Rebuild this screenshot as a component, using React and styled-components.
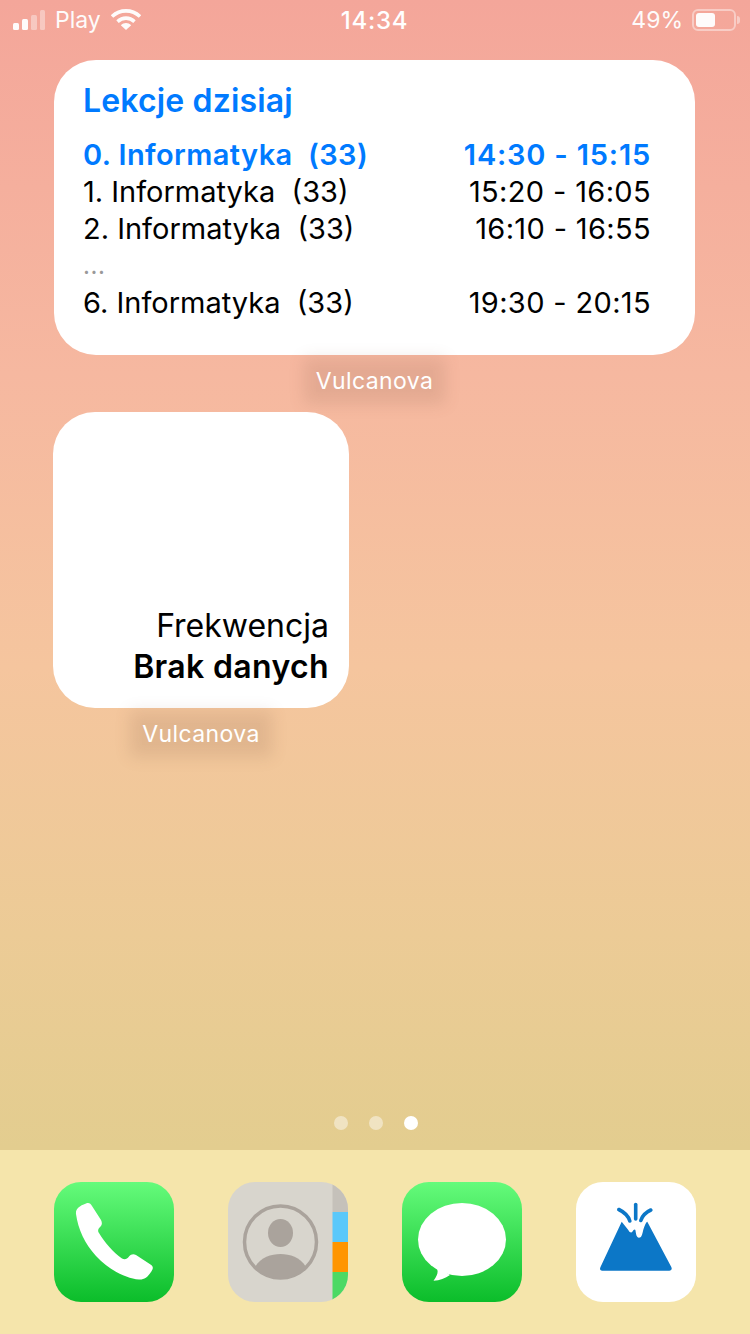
import React from 'react'
import styled, { createGlobalStyle } from 'styled-components'

const Global = createGlobalStyle`
  html, body { margin: 0; padding: 0; }
  body { font-family: Inter, "Liberation Sans", sans-serif; }
`

const lessons = [
  { name: '0. Informatyka', room: '(33)', time: '14:30 - 15:15', active: true },
  { name: '1. Informatyka', room: '(33)', time: '15:20 - 16:05' },
  { name: '2. Informatyka', room: '(33)', time: '16:10 - 16:55' },
  { dots: true },
  { name: '6. Informatyka', room: '(33)', time: '19:30 - 20:15' },
]

const Screen = styled.div`
  width: 750px;
  height: 1334px;
  overflow: hidden;
  display: flex;
  flex-direction: column;
  background: linear-gradient(180deg, #f4a69a 0%, #f6b8a0 28%, #f5c59e 50%, #eccb96 70%, #e3cd8f 86%, #e3cd8f 100%);
`

const StatusBar = styled.div`
  height: 40px;
  flex: none;
  display: grid;
  grid-template-columns: 1fr auto 1fr;
  align-items: center;
  padding: 0 14px 0 13px;
  color: #fff;
  font-size: 23px;
`

const StatusSide = styled.div`
  display: flex;
  align-items: center;
  gap: ${p => p.$gap || 10}px;
  justify-content: ${p => p.$end ? 'flex-end' : 'flex-start'};
  opacity: .96;
`

const Clock = styled.div`
  font-size: 24px;
  font-weight: 500;
  letter-spacing: .7px;
`

const Battery = styled.div`
  width: 44px;
  height: 22px;
  box-sizing: border-box;
  border: 2px solid rgba(255, 255, 255, .45);
  border-radius: 6px;
  padding: 2px;
  position: relative;

  &::before {
    content: '';
    display: block;
    width: 19px;
    height: 14px;
    border-radius: 3px;
    background: #fff;
  }

  &::after {
    content: '';
    position: absolute;
    right: -6px;
    top: 5px;
    width: 3px;
    height: 8px;
    border-radius: 0 3px 3px 0;
    background: rgba(255, 255, 255, .45);
  }
`

const Home = styled.div`
  flex: 1;
  padding: 20px 54px 0 53px;
  display: flex;
  flex-direction: column;
  align-items: flex-start;
`

const Slot = styled.div`
  display: flex;
  flex-direction: column;
  align-items: center;
  width: ${p => p.$wide ? '641px' : '296px'};
  margin: ${p => p.$wide ? '0 0 20px 1px' : '0'};
`

const Widget = styled.div`
  box-sizing: border-box;
  width: 100%;
  height: ${p => p.$h}px;
  border-radius: 42px;
  background: #fff;
`

const LessonsWidget = styled(Widget)`
  padding: 20px 44px 0 29px;
`

const Title = styled.div`
  color: #007aff;
  font-size: 32px;
  line-height: 42px;
  font-weight: 600;
  letter-spacing: .15px;
  margin-bottom: 14px;
`

const Row = styled.div`
  display: flex;
  justify-content: space-between;
  height: 37px;
  line-height: 37px;
  font-size: 29px;
  font-weight: ${p => p.$active ? 600 : 400};
  letter-spacing: ${p => p.$active ? '.4px' : '0'};
  color: ${p => p.$active ? '#007aff' : '#000'};
  white-space: pre;
`

const Time = styled.span`
  letter-spacing: ${p => p.$active ? '.8px' : '.35px'};
`

const Dots = styled.div`
  height: 37px;
  line-height: 37px;
  font-size: 24px;
  letter-spacing: .6px;
  color: #999;
`

const AttendanceWidget = styled(Widget)`
  display: flex;
  flex-direction: column;
  justify-content: flex-end;
  align-items: flex-end;
  padding: 0 20px 21px 0;
  color: #000;
  font-size: 32px;
  line-height: 41px;
`

const Strong = styled.div`
  font-weight: 600;
  letter-spacing: .35px;
`

const Label = styled.div`
  margin-top: 15px;
  height: 22px;
  line-height: 22px;
  font-size: 23px;
  letter-spacing: .4px;
  color: #fff;
  background: rgba(130, 90, 70, .15);
  box-shadow: 0 0 16px 12px rgba(130, 90, 70, .15);
`

const Pager = styled.div`
  flex: none;
  height: 34px;
  box-sizing: border-box;
  padding-left: 2px;
  display: flex;
  justify-content: center;
  align-items: flex-start;
  gap: 21px;
`

const Dot = styled.span`
  width: 14px;
  height: 14px;
  border-radius: 50%;
  background: ${p => p.$on ? '#fff' : 'rgba(255, 255, 255, .45)'};
`

const Dock = styled.div`
  flex: none;
  height: 184px;
  box-sizing: border-box;
  padding: 32px 54px 0;
  display: flex;
  justify-content: space-between;
  background: #f5e5ab;
`

const AppIcon = styled.div`
  width: 120px;
  height: 120px;
  border-radius: 27px;
  overflow: hidden;
  background: ${p => p.$bg || '#fff'};
`

const green = 'linear-gradient(180deg, #65fb7b 0%, #0bbd2a 100%)'

const Signal = () => (
  <svg width="32" height="22" viewBox="0 0 32 22">
    <rect x="0" y="14" width="6" height="7" rx="1.5" fill="#fff" />
    <rect x="9" y="10" width="6" height="11" rx="1.5" fill="#fff" />
    <rect x="18" y="6" width="6" height="15" rx="1.5" fill="#fff" opacity=".4" />
    <rect x="27" y="1" width="5" height="20" rx="1.5" fill="#fff" opacity=".4" />
  </svg>
)

const Wifi = () => (
  <svg width="30" height="22" viewBox="0 0 30 22">
    <path d="M1 7.5 C9 0 21 0 29 7.5" fill="none" stroke="#fff" strokeWidth="3.6" />
    <path d="M6.5 12.6 C11.5 8 18.5 8 23.5 12.6" fill="none" stroke="#fff" strokeWidth="3.6" />
    <path d="M15 21 L9.8 16.2 C12.8 13.4 17.2 13.4 20.2 16.2 Z" fill="#fff" />
  </svg>
)

const Phone = () => (
  <svg width="120" height="120" viewBox="0 0 120 120">
    <path d="M22 32 C21.500 27 25 24 32 21.500 C35 20.500 36.500 21.500 38 24 L47 38 C48.500 41 48 43 46 45 C44 47 43.500 49 45 51 C51 61 59 70 68 76.500 C71 78 73 77 75 74.500 C77 72 79.500 71.500 82 73 L96.500 82.500 C99.500 84.500 99.500 86.500 97 90 C93.500 95.500 90 97.800 85 97.500 C72 96.500 55 88 42 74 C31 62 24 47 22 32 Z" fill="#fff" />
  </svg>
)

const Contacts = () => (
  <svg width="120" height="120" viewBox="0 0 120 120">
    <rect x="104.500" y="0" width="15.500" height="30" fill="#c5c1ba" />
    <rect x="104.500" y="30" width="15.500" height="30" fill="#5ac8fa" />
    <rect x="104.500" y="60" width="15.500" height="30" fill="#ff9500" />
    <rect x="104.500" y="90" width="15.500" height="30" fill="#4cd964" />
    <circle cx="52.500" cy="60" r="36" fill="none" stroke="#aaa39c" strokeWidth="3.500" />
    <ellipse cx="52.500" cy="51" rx="12.500" ry="14" fill="#aaa39c" />
    <path d="M27 85 C33 75 43 72 52.500 72 C62 72 72 75 78 85 C71 92 62 95.500 52.500 95.500 C43 95.500 34 92 27 85 Z" fill="#aaa39c" />
  </svg>
)

const Messages = () => (
  <svg width="120" height="120" viewBox="0 0 120 120">
    <ellipse cx="60" cy="57.500" rx="44" ry="36.500" fill="#fff" />
    <path d="M31 82 C36 86 38 90 31.500 98.800 C38 98.500 43 96 48 93 Z" fill="#fff" />
  </svg>
)

const Volcano = () => (
  <svg width="120" height="120" viewBox="0 0 120 120">
    <path d="M45.700 39.700 L52.300 48 C54 51 55.500 51 56.500 49.500 C57.500 48 59 46.500 59.500 48.500 C60 52 60.500 55.700 63 55.700 C65.500 55.700 66 53 67 49 C68 45 70 40 71.300 39.700 L95.300 85 C96.500 87.500 95 88.800 92.500 88.800 L27 88.800 C24.500 88.800 23.300 87.500 24.500 85 Z" fill="#0c77c7" />
    <g fill="none" stroke="#0c77c7" strokeWidth="3.600" strokeLinecap="round">
      <path d="M59.700 22.500 L59.700 37" />
      <path d="M42.800 27.500 C47 29.500 52 33 53.800 39" />
      <path d="M74.800 28 C70.500 30 66.500 33 64.800 38.500" />
    </g>
  </svg>
)

export default function App() {
  return (
    <Screen>
      <Global />
      <StatusBar>
        <StatusSide>
          <Signal />
          <span>Play</span>
          <Wifi />
        </StatusSide>
        <Clock>14:34</Clock>
        <StatusSide $end $gap={9}>
          <span>49%</span>
          <Battery />
        </StatusSide>
      </StatusBar>
      <Home>
        <Slot $wide>
          <LessonsWidget $h={295}>
            <Title>Lekcje dzisiaj</Title>
            {lessons.map((l, i) => l.dots
              ? <Dots key={i}>...</Dots>
              : (
                <Row key={i} $active={l.active}>
                  <span>{l.name}  {l.room}</span>
                  <Time $active={l.active}>{l.time}</Time>
                </Row>
              ))}
          </LessonsWidget>
          <Label>Vulcanova</Label>
        </Slot>
        <Slot>
          <AttendanceWidget $h={296}>
            <div>Frekwencja</div>
            <Strong>Brak danych</Strong>
          </AttendanceWidget>
          <Label>Vulcanova</Label>
        </Slot>
      </Home>
      <Pager>
        <Dot />
        <Dot />
        <Dot $on />
      </Pager>
      <Dock>
        <AppIcon $bg={green}><Phone /></AppIcon>
        <AppIcon $bg="#d8d5cd"><Contacts /></AppIcon>
        <AppIcon $bg={green}><Messages /></AppIcon>
        <AppIcon><Volcano /></AppIcon>
      </Dock>
    </Screen>
  )
}
